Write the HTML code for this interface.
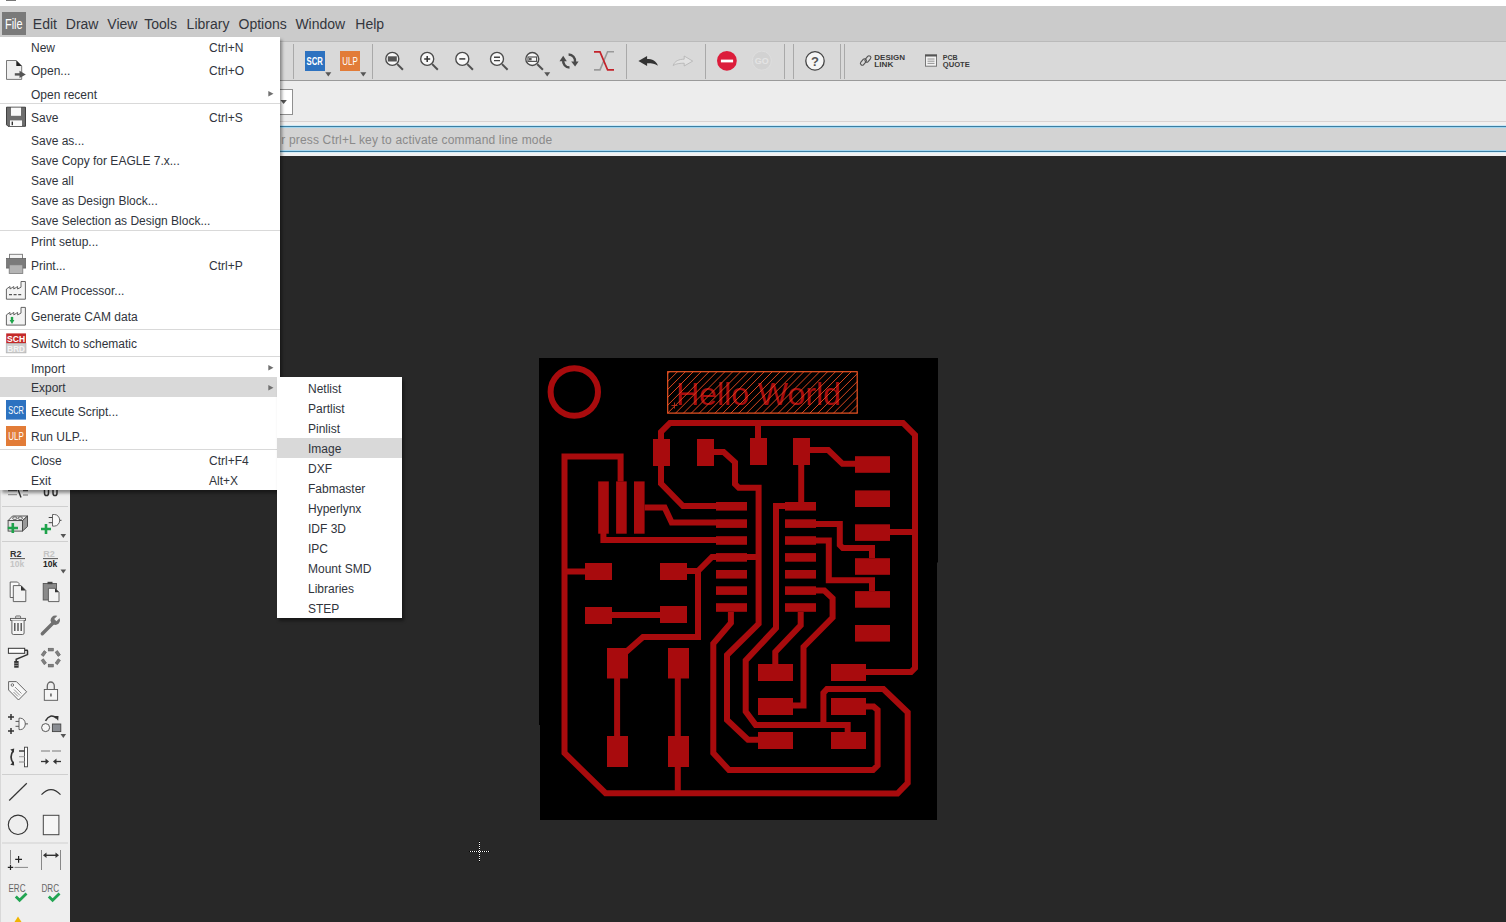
<!DOCTYPE html>
<html><head><meta charset="utf-8">
<style>
*{margin:0;padding:0;box-sizing:border-box}
html,body{width:1506px;height:922px;overflow:hidden;background:#282828;font-family:"Liberation Sans",sans-serif;position:relative}
.a{position:absolute}
.t{position:absolute;white-space:nowrap}
</style></head><body>
<div class="a" style="left:0;top:0;width:1506px;height:6px;background:#fff"></div>
<div class="a" style="left:6px;top:0;width:10px;height:1px;background:#777"></div>
<div class="a" style="left:0;top:6px;width:1506px;height:36px;background:#cbcbcb;border-bottom:1px solid #bababa"></div>
<div class="a" style="left:0;top:42px;width:1506px;height:39px;background:#d9d9d9;border-bottom:1px solid #9a9a9a"></div>
<div class="a" style="left:0;top:81px;width:1506px;height:41px;background:#ededed;border-bottom:1px solid #d8d3d3"></div>
<div class="a" style="left:0;top:122px;width:1506px;height:34px;background:#f1f1f1"></div>
<div class="a" style="left:0;top:125px;width:1506px;height:1px;background:#cde9f7"></div>
<div class="a" style="left:0;top:126px;width:1506px;height:1px;background:#3d7ea2"></div>
<div class="a" style="left:0;top:127px;width:1506px;height:1px;background:#a2d6ef"></div>
<div class="a" style="left:0;top:128px;width:1506px;height:22px;background:#d3d3d3"></div>
<div class="a" style="left:0;top:150px;width:1506px;height:1px;background:#a2d6ef"></div>
<div class="a" style="left:0;top:151px;width:1506px;height:1px;background:#3d7ea2"></div>
<div class="a" style="left:0;top:152px;width:1506px;height:1px;background:#d6eef8"></div>
<div class="a" style="left:0;top:156px;width:70px;height:766px;background:#eeeeee;border-left:1px solid #d8d8d8"></div>
<div class="a" style="left:2px;top:12px;width:24px;height:23px;background:#7a7a7a"></div>
<div class="t" style="left:5.20px;top:15.25px;font-size:14px;line-height:18px;color:#ffffff;transform:scaleX(0.78);transform-origin:0 0">File</div>

<div class="t" style="left:32.80px;top:15.25px;font-size:14px;line-height:18px;color:#33363d;">Edit</div>

<div class="t" style="left:65.80px;top:15.25px;font-size:14px;line-height:18px;color:#33363d;">Draw</div>

<div class="t" style="left:107.30px;top:15.25px;font-size:14px;line-height:18px;color:#33363d;">View</div>

<div class="t" style="left:144.30px;top:15.25px;font-size:14px;line-height:18px;color:#33363d;">Tools</div>

<div class="t" style="left:186.60px;top:15.25px;font-size:14px;line-height:18px;color:#33363d;">Library</div>

<div class="t" style="left:238.50px;top:15.25px;font-size:14px;line-height:18px;color:#33363d;">Options</div>

<div class="t" style="left:295.40px;top:15.25px;font-size:14px;line-height:18px;color:#33363d;">Window</div>

<div class="t" style="left:355.30px;top:15.25px;font-size:14px;line-height:18px;color:#33363d;">Help</div>

<div class="t" style="left:281.30px;top:133.14px;font-size:12px;line-height:15px;color:#8a8a8a;letter-spacing:0.16px">r press Ctrl+L key to activate command line mode</div>

<div class="a" style="left:250px;top:89px;width:43px;height:26px;background:#fff;border:1px solid #8f8f8f"></div>
<svg class="a" style="left:280px;top:100px" width="8" height="5"><path d="M0.4 0H6.9L3.65 3.9Z" fill="#555"/></svg>
<svg class="a" style="left:0;top:0" width="1506" height="100"><rect x="293" y="44" width="1" height="35" fill="#a9a9a9"/><rect x="305" y="51" width="20" height="20" fill="#2d72c0"/><text x="314.7" y="65" text-anchor="middle" font-family="Liberation Sans" font-weight="bold" font-size="11" fill="#fff" textLength="16.3" lengthAdjust="spacingAndGlyphs">SCR</text><path d="M325.3 72.2 L331.3 72.2 L328.3 76.4 Z" fill="#555"/><rect x="340" y="51" width="20" height="20" fill="#e27c38"/><text x="350" y="65" text-anchor="middle" font-family="Liberation Sans" font-size="10.5" fill="#fff" textLength="15.5" lengthAdjust="spacingAndGlyphs">ULP</text><path d="M360.3 72.2 L366.3 72.2 L363.3 76.4 Z" fill="#555"/><rect x="372" y="44" width="1" height="35" fill="#a9a9a9"/><line x1="397.3" y1="64.1" x2="402.90000000000003" y2="69.7" stroke="#505050" stroke-width="2"/><circle cx="392.3" cy="58.9" r="6.5" fill="#f8f8f8" stroke="#4a4a4a" stroke-width="1.35"/><rect x="387.8" y="56.3" width="9" height="5.2" fill="#555"/><line x1="432.2" y1="64.1" x2="437.8" y2="69.7" stroke="#505050" stroke-width="2"/><circle cx="427.2" cy="58.9" r="6.5" fill="#f8f8f8" stroke="#4a4a4a" stroke-width="1.35"/><path d="M424.2 58.9 H430.2 M427.2 55.9 V61.9" stroke="#333" stroke-width="1.5"/><line x1="467.3" y1="64.1" x2="472.90000000000003" y2="69.7" stroke="#505050" stroke-width="2"/><circle cx="462.3" cy="58.9" r="6.5" fill="#f8f8f8" stroke="#4a4a4a" stroke-width="1.35"/><path d="M459.3 58.9 H465.3" stroke="#444" stroke-width="1.6"/><line x1="502" y1="64.1" x2="507.6" y2="69.7" stroke="#505050" stroke-width="2"/><circle cx="497" cy="58.9" r="6.5" fill="#f8f8f8" stroke="#4a4a4a" stroke-width="1.35"/><path d="M494 57.3 H500 M494 60.6 H500" stroke="#444" stroke-width="1.4"/><line x1="537.3" y1="64.2" x2="542.9" y2="69.8" stroke="#505050" stroke-width="2"/><circle cx="532.3" cy="59" r="6.5" fill="#f8f8f8" stroke="#4a4a4a" stroke-width="1.35"/><rect x="528" y="57" width="8.6" height="4.4" fill="none" stroke="#555" stroke-width="1.2"/><rect x="529" y="58" width="2.6" height="2.4" fill="#555"/><path d="M544.2 72.2 L550.2 72.2 L547.2 76.4 Z" fill="#555"/><path d="M569.5 67.5 A6.5 6.5 0 0 1 563.2 60" fill="none" stroke="#4a4a4a" stroke-width="2.4"/><path d="M559.5 61.2 L563.2 55.8 L566.8 61.2 Z" fill="#4a4a4a"/><path d="M568.6 54.5 A6.5 6.5 0 0 1 575 62" fill="none" stroke="#4a4a4a" stroke-width="2.4"/><path d="M571.2 61.5 L575.1 66.6 L578.6 61.5 Z" fill="#4a4a4a"/><path d="M594 69.9 H600 L607.6 51.8 H614" fill="none" stroke="#9a9a9a" stroke-width="1.6"/><path d="M594 51.8 H600 L607.6 69.9 H614" fill="none" stroke="#c3222a" stroke-width="1.7"/><rect x="626" y="44" width="1" height="35" fill="#a9a9a9"/><path d="M638.4 61.1 L647.1 55.9 L647.1 59.1 C652 59.1 656.5 61 657.9 65.8 C655 63.6 651 63.1 647.1 63.2 L647.1 66.1 Z" fill="#333"/><path d="M692.7 61.1 L684.2 56 L684.2 59.2 C679 59.2 674.5 61 673.2 65.5 C676 63.6 680 63.2 684.2 63.2 L684.2 66 Z" fill="#e2e2e2" stroke="#b2b2b2" stroke-width="0.8"/><rect x="705" y="44" width="1" height="35" fill="#a9a9a9"/><circle cx="726.9" cy="60.8" r="9.9" fill="#dc1d3b"/><rect x="720.9" y="59.6" width="12.2" height="2.8" fill="#fff"/><circle cx="761.8" cy="60.7" r="9.5" fill="#d2d2d2" stroke="#e0e0e0" stroke-width="0.8"/><text x="761.8" y="64" text-anchor="middle" font-family="Liberation Sans" font-size="9" font-weight="bold" fill="#e4e4e4">GO</text><rect x="784" y="44" width="1" height="35" fill="#a9a9a9"/><rect x="793" y="44" width="1" height="35" fill="#a9a9a9"/><circle cx="815" cy="60.9" r="9.2" fill="#f5f5f5" stroke="#444" stroke-width="1.3"/><text x="815" y="65.6" text-anchor="middle" font-family="Liberation Sans" font-size="13" font-weight="bold" fill="#555">?</text><rect x="840" y="44" width="1" height="35" fill="#a9a9a9"/><rect x="844" y="44" width="1" height="35" fill="#a9a9a9"/><g fill="none" stroke="#555" stroke-width="1.1"><rect x="859.8" y="60.2" width="7.2" height="3.6" rx="1.8" transform="rotate(-50 863.4 62)"/><rect x="864.3" y="57.2" width="7.2" height="3.6" rx="1.8" transform="rotate(-50 867.9 59)"/></g><text x="874.3" y="59.6" font-family="Liberation Sans" font-weight="bold" font-size="8" fill="#3a3a3a" textLength="30.6" lengthAdjust="spacingAndGlyphs">DESIGN</text><text x="874.3" y="67.4" font-family="Liberation Sans" font-weight="bold" font-size="8" fill="#3a3a3a" textLength="19" lengthAdjust="spacingAndGlyphs">LINK</text><rect x="925.5" y="55" width="11" height="11.2" fill="#f2f2f2" stroke="#777" stroke-width="1"/><rect x="925" y="54.5" width="12" height="2" fill="#555"/><path d="M927.5 59 H934.5 M927.5 61.2 H934.5 M927.5 63.4 H934.5" stroke="#888" stroke-width="0.9"/><text x="942.8" y="59.6" font-family="Liberation Sans" font-weight="bold" font-size="8" fill="#3a3a3a" textLength="14.8" lengthAdjust="spacingAndGlyphs">PCB</text><text x="942.8" y="67.4" font-family="Liberation Sans" font-weight="bold" font-size="8" fill="#3a3a3a" textLength="27" lengthAdjust="spacingAndGlyphs">QUOTE</text></svg>
<svg class="a" style="left:0;top:0" width="72" height="922"><path d="M8 490.6 H17 M23 490.6 H28" stroke="#555" stroke-width="1.2"/><path d="M8 494.7 H17 M23 495 H28" stroke="#9a9a9a" stroke-width="1.3"/><path d="M18 489.5 L21 497.5" stroke="#333" stroke-width="1.4"/><path d="M44.5 489 V493 A2 2.6 0 0 0 48.5 493 V489 M53 489 V493 A2 2.6 0 0 0 57 493 V489" fill="none" stroke="#333" stroke-width="1.5"/><rect x="2" y="506" width="66" height="1" fill="#cfcfcf"/><path d="M8.1 520.6 L12.5 516 L27.5 516 L22.5 520.6 Z" fill="#f0f0f0" stroke="#444" stroke-width="0.9"/><path d="M22.5 520.6 L27.5 516 L27.5 526.5 L22.5 531.1 Z" fill="#9a9a9a" stroke="#444" stroke-width="0.9"/><rect x="8.1" y="520.6" width="14.4" height="10.5" fill="#e2e2e2" stroke="#444" stroke-width="0.9"/><ellipse cx="14.8" cy="518.2" rx="2.3" ry="1.3" fill="none" stroke="#444" stroke-width="0.8"/><ellipse cx="20.3" cy="518.2" rx="2.3" ry="1.3" fill="none" stroke="#444" stroke-width="0.8"/><path d="M7.8 528 H18 M12.8 523 V533" stroke="#1da24a" stroke-width="2.6"/><path d="M52.5 514.5 H54.5 A5.2 5.8 0 0 1 54.5 526.1 H52.5 Z" fill="#f8f8f8" stroke="#555" stroke-width="0.9"/><path d="M48.7 517.5 H52.5 M48.7 522.7 H52.5 M59.7 520.3 H61.5" stroke="#444" stroke-width="1"/><path d="M41 529 H51 M46 524 V534" stroke="#1da24a" stroke-width="2.6"/><path d="M60.5 534 L66.1 534 L63.3 538 Z" fill="#555"/><rect x="2" y="541" width="66" height="1" fill="#cfcfcf"/><text x="10" y="557" font-family="Liberation Sans" font-weight="bold" font-size="9" fill="#333">R2</text><rect x="10" y="558.2" width="15" height="0.9" fill="#444"/><text x="10" y="566.6" font-family="Liberation Sans" font-weight="bold" font-size="8.5" fill="#c4c4c4">10k</text><text x="43.3" y="557" font-family="Liberation Sans" font-weight="bold" font-size="9" fill="#c4c4c4">R2</text><rect x="43" y="558.2" width="15" height="0.9" fill="#444"/><text x="43" y="566.6" font-family="Liberation Sans" font-weight="bold" font-size="8.5" fill="#222">10k</text><path d="M60.5 569.5 L66.1 569.5 L63.3 573.5 Z" fill="#555"/><path d="M10.2 582 H17.5 L19 583.5 V597.5 H10.2 Z" fill="#fafafa" stroke="#555" stroke-width="0.9"/><path d="M13.3 585.6 H21 L25.8 590.4 V601.6 H13.3 Z" fill="#f2f2f2" stroke="#555" stroke-width="0.9"/><path d="M21 585.6 L25.8 590.4 H21 Z" fill="#333"/><rect x="43.2" y="583.5" width="13.3" height="16.5" fill="#8a8a8a" stroke="#555" stroke-width="0.9"/><rect x="47.5" y="581.8" width="5" height="2.4" fill="#444"/><path d="M48.4 588.3 H55 L59 592.3 V601.6 H48.4 Z" fill="#f2f2f2" stroke="#555" stroke-width="0.9"/><path d="M55 588.3 L59 592.3 H55 Z" fill="#333"/><rect x="15.6" y="616" width="5" height="2.3" rx="0.8" fill="none" stroke="#555" stroke-width="0.9"/><rect x="10.5" y="618.4" width="15" height="2" fill="#f5f5f5" stroke="#555" stroke-width="0.9"/><path d="M11.9 620.4 V633 Q11.9 634.5 13.4 634.5 H22.6 Q24.1 634.5 24.1 633 V620.4" fill="#f5f5f5" stroke="#555" stroke-width="0.9"/><path d="M14.8 623 V631 M18 623 V631 M21.2 623 V631" stroke="#444" stroke-width="1.3"/><path d="M42.3 633.8 L52.8 623.3" stroke="#707070" stroke-width="3.4" stroke-linecap="round"/><circle cx="55.3" cy="620.3" r="4.7" fill="#707070"/><rect x="56.2" y="614.2" width="3.2" height="7" fill="#eeeeee" transform="rotate(45 57.8 617.7)"/><rect x="8.4" y="648.3" width="16.3" height="5" fill="#fff" stroke="#333" stroke-width="1"/><path d="M24.7 650.3 H26.9 Q27.5 650.3 27.5 651 V654.6 L16.2 659.3 V661.5" fill="none" stroke="#333" stroke-width="1.5"/><rect x="14.2" y="661" width="4.4" height="6.7" fill="#333"/><path d="M14.2 663.3 H18.6 M14.2 665.5 H18.6" stroke="#999" stroke-width="0.8"/><rect x="48.199999999999996" y="648.2" width="5.2" height="2.8" fill="#808080" stroke="#555" stroke-width="0.5" transform="rotate(0 50.8 649.6)"/><rect x="48.199999999999996" y="664.2" width="5.2" height="2.8" fill="#808080" stroke="#555" stroke-width="0.5" transform="rotate(0 50.8 665.6)"/><rect x="41.199999999999996" y="652.1" width="5.2" height="2.8" fill="#808080" stroke="#555" stroke-width="0.5" transform="rotate(-55 43.8 653.5)"/><rect x="55.199999999999996" y="652.1" width="5.2" height="2.8" fill="#808080" stroke="#555" stroke-width="0.5" transform="rotate(55 57.8 653.5)"/><rect x="41.199999999999996" y="660.3000000000001" width="5.2" height="2.8" fill="#808080" stroke="#555" stroke-width="0.5" transform="rotate(55 43.8 661.7)"/><rect x="55.199999999999996" y="660.3000000000001" width="5.2" height="2.8" fill="#808080" stroke="#555" stroke-width="0.5" transform="rotate(-55 57.8 661.7)"/><path d="M8.6 681.6 H16.4 L26.6 691.8 L18.5 700 L8.6 690 Z" fill="#f7f7f7" stroke="#555" stroke-width="0.9"/><circle cx="12.4" cy="685" r="1.3" fill="none" stroke="#555" stroke-width="0.8"/><path d="M15 687 L21.5 693.5 M14 689.5 L20 695.5 M13.5 692 L18 696.5" stroke="#777" stroke-width="0.8"/><path d="M47.3 689.5 V686 A3.5 4 0 0 1 54.3 686 V689.5" fill="none" stroke="#666" stroke-width="1.3"/><rect x="44.3" y="689.5" width="13.3" height="10.8" fill="#f6f6f6" stroke="#555" stroke-width="0.9"/><rect x="50.3" y="693.5" width="1.3" height="3" fill="#444"/><path d="M8 717.1 H14 M11 714.1 V720.1 M8 731 H14 M11 728 V734" stroke="#333" stroke-width="1.5"/><path d="M19 718.2 H20.5 A4.8 5.7 0 0 1 20.5 729.6 H19 Z" fill="#f8f8f8" stroke="#555" stroke-width="0.9"/><path d="M15.5 721.4 H19 M15.5 726.3 H19 M25.2 723.9 H28" stroke="#555" stroke-width="1"/><circle cx="45.6" cy="727.6" r="4" fill="#f6f6f6" stroke="#444" stroke-width="0.9"/><rect x="52.4" y="724" width="8.4" height="7.6" fill="#898c92" stroke="#444" stroke-width="0.9"/><path d="M45.5 720.8 Q50 713 56.5 718" fill="none" stroke="#333" stroke-width="1.6"/><path d="M54 716 L58.5 716 L58.2 720.8 Z" fill="#333"/><path d="M60.5 734 L66.1 734 L63.3 738 Z" fill="#555"/><path d="M13.3 750.5 Q8.8 757 13.3 763.5" fill="none" stroke="#333" stroke-width="1.7"/><path d="M10.3 749.5 L14.2 748.5 L13.8 752.8 Z M10.3 764.7 L14.2 765.5 L13.8 761.3 Z" fill="#333"/><rect x="24.5" y="747.2" width="3" height="19.6" fill="#fff" stroke="#444" stroke-width="0.9"/><path d="M19 751 H24.5" stroke="#333" stroke-width="1.4"/><path d="M19 756.6 H24.5 M19 762 H24.5" stroke="#aaa" stroke-width="1.4"/><path d="M41 751 H50 M52 751 H61" stroke="#a0a0a0" stroke-width="1.4"/><path d="M41 761.5 H46" stroke="#333" stroke-width="1.3"/><path d="M45.5 758.5 L49 761.5 L45.5 764.5 Z" fill="#333"/><path d="M56 761.5 H61" stroke="#333" stroke-width="1.3"/><path d="M56.5 758.5 L53 761.5 L56.5 764.5 Z" fill="#333"/><rect x="2" y="774" width="66" height="1" fill="#cfcfcf"/><path d="M9.2 800.5 L26.8 783.2" stroke="#333" stroke-width="1.2"/><path d="M41.5 794.6 Q51 784.6 60.5 794.6" fill="none" stroke="#333" stroke-width="1.2"/><circle cx="18" cy="824.8" r="9.7" fill="none" stroke="#333" stroke-width="1.1"/><rect x="43.3" y="815.3" width="15.6" height="19.4" fill="#f6f6f6" stroke="#444" stroke-width="1"/><rect x="2" y="842.5" width="66" height="1" fill="#cfcfcf"/><path d="M10.5 850 V864 M14.5 867.4 H28 M41.5 850 V870 M60.5 850 V870" stroke="#888" stroke-width="1"/><path d="M7.8 867.4 H13.2 M10.5 864.7 V870.1 M15.2 859.3 H22 M18.6 855.9 V862.7" stroke="#222" stroke-width="1.2"/><path d="M45 855.3 H57" stroke="#333" stroke-width="1.4"/><path d="M43 855.3 L46.5 852.5 V858.1 Z M59 855.3 L55.5 852.5 V858.1 Z" fill="#333"/><text x="8.5" y="892" font-family="Liberation Sans" font-size="10.6" fill="#666" textLength="17" lengthAdjust="spacingAndGlyphs">ERC</text><text x="41.5" y="892" font-family="Liberation Sans" font-size="10.6" fill="#666" textLength="17.5" lengthAdjust="spacingAndGlyphs">DRC</text><path d="M15.8 896.5 L19.6 900.3 L26.5 893.6 M48.8 896.5 L52.6 900.3 L59.5 893.6" fill="none" stroke="#22a552" stroke-width="2.8"/><path d="M14.5 922 L18 916.5 L21.5 922 Z" fill="#f0b400"/></svg>
<svg class="a" style="left:0;top:0" width="1506" height="922" fill="#a80b0d"><path d="M539 358 H938 V562.5 H937 V820 H540 V725 H539 Z" fill="#000"/>
<rect x="653" y="439" width="17" height="27"/>
<rect x="697" y="439" width="17" height="27"/>
<rect x="750" y="438" width="17" height="27"/>
<rect x="793" y="438" width="17" height="27"/>
<rect x="598.2" y="481.4" width="10.6" height="52.3"/>
<rect x="616.1" y="481.4" width="10.6" height="52.3"/>
<rect x="634" y="481.4" width="10.6" height="52.3"/>
<rect x="585" y="563" width="27" height="17"/>
<rect x="660" y="563" width="27" height="17"/>
<rect x="585" y="607" width="27" height="17"/>
<rect x="660" y="606" width="27" height="17"/>
<rect x="607" y="648" width="21" height="30.5"/>
<rect x="668" y="648" width="21" height="30.5"/>
<rect x="607" y="736" width="21" height="31"/>
<rect x="668" y="736" width="21" height="31"/>
<rect x="758" y="664" width="35" height="17"/>
<rect x="758" y="698" width="35" height="17"/>
<rect x="758" y="732" width="35" height="17"/>
<rect x="831" y="664" width="35" height="17"/>
<rect x="831" y="698" width="35" height="17"/>
<rect x="831" y="732" width="35" height="17"/>
<rect x="855" y="456.2" width="35" height="16.6"/>
<rect x="855" y="490.4" width="35" height="16.6"/>
<rect x="855" y="524.3" width="35" height="16.6"/>
<rect x="855" y="558.2" width="35" height="16.6"/>
<rect x="855" y="591.1" width="35" height="16.6"/>
<rect x="855" y="625" width="35" height="16.6"/>
<rect x="716" y="502" width="31" height="8.6"/>
<rect x="785" y="502" width="31" height="8.6"/>
<rect x="716" y="519.3" width="31" height="8.6"/>
<rect x="785" y="519.3" width="31" height="8.6"/>
<rect x="716" y="536.2" width="31" height="8.6"/>
<rect x="785" y="536.2" width="31" height="8.6"/>
<rect x="716" y="553.1" width="31" height="8.6"/>
<rect x="785" y="553.1" width="31" height="8.6"/>
<rect x="716" y="570" width="31" height="8.6"/>
<rect x="785" y="570" width="31" height="8.6"/>
<rect x="716" y="586.3" width="31" height="8.6"/>
<rect x="785" y="586.3" width="31" height="8.6"/>
<rect x="716" y="603.2" width="31" height="8.6"/>
<rect x="785" y="603.2" width="31" height="8.6"/>
<path d="M661 439 L661 432 L670 423 L903 423 L915 435 L915 668 L911 672 L866 672" fill="none" stroke="#a80b0d" stroke-width="6" stroke-linejoin="miter"/>
<path d="M890 532 L915 532" fill="none" stroke="#a80b0d" stroke-width="6" stroke-linejoin="miter"/>
<path d="M758 423 L758 438" fill="none" stroke="#a80b0d" stroke-width="6" stroke-linejoin="miter"/>
<path d="M661 465 L661 483.6 L683 506 L716 506" fill="none" stroke="#a80b0d" stroke-width="6" stroke-linejoin="miter"/>
<path d="M620.6 481.4 L620.6 456.6 L564.5 456.6 L564.5 753 L605.6 793.2 L897.5 793.5 L907.7 783 L907.7 712.3 L883.4 689 L827 689 L823.4 693 L823.4 725" fill="none" stroke="#a80b0d" stroke-width="6" stroke-linejoin="miter"/>
<path d="M565 571.5 L585 571.5" fill="none" stroke="#a80b0d" stroke-width="6" stroke-linejoin="miter"/>
<path d="M612 615 L660 615" fill="none" stroke="#a80b0d" stroke-width="6" stroke-linejoin="miter"/>
<path d="M759 557 L712 557 L698 571 L687 571" fill="none" stroke="#a80b0d" stroke-width="6" stroke-linejoin="miter"/>
<path d="M698 571 L698 637 L643 637 L626 652" fill="none" stroke="#a80b0d" stroke-width="6" stroke-linejoin="miter"/>
<path d="M617.1 678 L617.1 736" fill="none" stroke="#a80b0d" stroke-width="6" stroke-linejoin="miter"/>
<path d="M677.8 678 L677.8 736" fill="none" stroke="#a80b0d" stroke-width="6" stroke-linejoin="miter"/>
<path d="M677.8 767 L677.8 793" fill="none" stroke="#a80b0d" stroke-width="6" stroke-linejoin="miter"/>
<path d="M603.4 533 L603.4 540 L716 540" fill="none" stroke="#a80b0d" stroke-width="6" stroke-linejoin="miter"/>
<path d="M644.6 507.4 L664.6 507.4 L671.7 522.5 L716 522.5" fill="none" stroke="#a80b0d" stroke-width="6" stroke-linejoin="miter"/>
<path d="M714 452 L723.6 452 L735 462.3 L735 484 L738.8 487.8 L758.6 487.8 L758.6 623.8 L727 655 L727 720 L748 739.8 L758 739.8" fill="none" stroke="#a80b0d" stroke-width="6" stroke-linejoin="miter"/>
<path d="M785 506 L776 506 L776 628 L745.7 660.5 L745.7 711.6 L755.6 724.9 L847.7 724.9 L847.7 732" fill="none" stroke="#a80b0d" stroke-width="6" stroke-linejoin="miter"/>
<path d="M810 450 L828.2 450 L842.5 463.8 L855 463.8" fill="none" stroke="#a80b0d" stroke-width="6" stroke-linejoin="miter"/>
<path d="M801.2 465 L801.2 502" fill="none" stroke="#a80b0d" stroke-width="6" stroke-linejoin="miter"/>
<path d="M816 523.9 L839.8 523.9 L839.8 545 L842.8 548 L872 548 L872 558" fill="none" stroke="#a80b0d" stroke-width="6" stroke-linejoin="miter"/>
<path d="M816 540.4 L828.8 540.4 L828.8 580.2 L872 580.2 L872 591" fill="none" stroke="#a80b0d" stroke-width="6" stroke-linejoin="miter"/>
<path d="M816 590.5 L824.3 590.5 L832.6 598.4 L832.6 617.5 L803.5 647 L803.5 705.5 L793 705.5" fill="none" stroke="#a80b0d" stroke-width="6" stroke-linejoin="miter"/>
<path d="M800.7 612 L800.7 625.2 L775.3 652 L775.3 664" fill="none" stroke="#a80b0d" stroke-width="6" stroke-linejoin="miter"/>
<path d="M730.9 612 L730.9 623 L713.3 643.6 L713.3 753 L729 770.1 L873 770.1 L877.6 765.6 L877.6 710 L873.6 706.6 L866 706.6" fill="none" stroke="#a80b0d" stroke-width="6" stroke-linejoin="miter"/>
<circle cx="574.3" cy="392" r="23.7" fill="none" stroke="#a80b0d" stroke-width="6"/>
<defs><clipPath id="hw"><rect x="667.2" y="371.2" width="190.5" height="42.4"/></clipPath></defs>
<text x="676" y="404.6" font-family="Liberation Sans" font-size="32" fill="#a80b0d">Hello World</text>
<path clip-path="url(#hw)" d="M588.2 413.6 L630.6 371.2 M596.1 413.6 L638.5 371.2 M604.0 413.6 L646.4 371.2 M611.9 413.6 L654.3 371.2 M619.8 413.6 L662.2 371.2 M627.7 413.6 L670.1 371.2 M635.6 413.6 L678.0 371.2 M643.5 413.6 L685.9 371.2 M651.4 413.6 L693.8 371.2 M659.3 413.6 L701.7 371.2 M667.2 413.6 L709.6 371.2 M675.1 413.6 L717.5 371.2 M683.0 413.6 L725.4 371.2 M690.9 413.6 L733.3 371.2 M698.8 413.6 L741.2 371.2 M706.7 413.6 L749.1 371.2 M714.6 413.6 L757.0 371.2 M722.5 413.6 L764.9 371.2 M730.4 413.6 L772.8 371.2 M738.3 413.6 L780.7 371.2 M746.2 413.6 L788.6 371.2 M754.1 413.6 L796.5 371.2 M762.0 413.6 L804.4 371.2 M769.9 413.6 L812.3 371.2 M777.8 413.6 L820.2 371.2 M785.7 413.6 L828.1 371.2 M793.6 413.6 L836.0 371.2 M801.5 413.6 L843.9 371.2 M809.4 413.6 L851.8 371.2 M817.3 413.6 L859.7 371.2 M825.2 413.6 L867.6 371.2 M833.1 413.6 L875.5 371.2 M841.0 413.6 L883.4 371.2 M848.9 413.6 L891.3 371.2 M856.8 413.6 L899.2 371.2 M864.7 413.6 L907.1 371.2 M872.6 413.6 L915.0 371.2 M880.5 413.6 L922.9 371.2 M888.4 413.6 L930.8 371.2 M896.3 413.6 L938.7 371.2 M904.2 413.6 L946.6 371.2 M912.1 413.6 L954.5 371.2 M920.0 413.6 L962.4 371.2 M927.9 413.6 L970.3 371.2 M935.8 413.6 L978.2 371.2 M943.7 413.6 L986.1 371.2 M951.6 413.6 L994.0 371.2 M959.5 413.6 L1001.9 371.2 M967.4 413.6 L1009.8 371.2 M975.3 413.6 L1017.7 371.2" stroke="#d9471f" stroke-width="1"/>
<rect x="667.7" y="371.7" width="189.5" height="41.4" fill="none" stroke="#ea5424" stroke-width="1.2"/>
<path d="M671.5 405.5 H677.5 M674.5 402.5 V408.5" stroke="#c0301a" stroke-width="0.9"/></svg>
<svg class="a" style="left:0;top:0" width="1506" height="922"><rect x="469" y="851" width="21" height="1" fill="#000"/><rect x="479" y="841" width="1" height="21" fill="#000"/><rect x="470" y="851" width="1" height="1" fill="#fff"/><rect x="479" y="842" width="1" height="1" fill="#fff"/><rect x="472" y="851" width="1" height="1" fill="#fff"/><rect x="479" y="844" width="1" height="1" fill="#fff"/><rect x="474" y="851" width="1" height="1" fill="#fff"/><rect x="479" y="846" width="1" height="1" fill="#fff"/><rect x="476" y="851" width="1" height="1" fill="#fff"/><rect x="479" y="848" width="1" height="1" fill="#fff"/><rect x="482" y="851" width="1" height="1" fill="#fff"/><rect x="479" y="854" width="1" height="1" fill="#fff"/><rect x="484" y="851" width="1" height="1" fill="#fff"/><rect x="479" y="856" width="1" height="1" fill="#fff"/><rect x="486" y="851" width="1" height="1" fill="#fff"/><rect x="479" y="858" width="1" height="1" fill="#fff"/><rect x="488" y="851" width="1" height="1" fill="#fff"/><rect x="479" y="860" width="1" height="1" fill="#fff"/><rect x="478" y="851" width="1" height="1" fill="#fff"/><rect x="480" y="851" width="1" height="1" fill="#fff"/><rect x="479" y="850" width="1" height="1" fill="#fff"/><rect x="479" y="852" width="1" height="1" fill="#fff"/></svg>
<div class="a" style="left:0;top:36.5px;width:280px;height:453.3px;background:#fff;box-shadow:2px 3px 3px rgba(0,0,0,0.4)"></div>
<div class="a" style="left:0;top:377px;width:280px;height:20px;background:#d9d9d9"></div>
<div class="a" style="left:0;top:103px;width:280px;height:1px;background:#d9d9d9"></div>
<div class="a" style="left:0;top:230px;width:280px;height:1px;background:#d9d9d9"></div>
<div class="a" style="left:0;top:329px;width:280px;height:1px;background:#d9d9d9"></div>
<div class="a" style="left:0;top:356px;width:280px;height:1px;background:#d9d9d9"></div>
<div class="a" style="left:0;top:449px;width:280px;height:1px;background:#d9d9d9"></div>
<div class="t" style="left:31.00px;top:41.44px;font-size:12px;line-height:15px;color:#30343c;">New</div>

<div class="t" style="left:209.00px;top:41.44px;font-size:12px;line-height:15px;color:#30343c;">Ctrl+N</div>

<div class="t" style="left:31.00px;top:64.24px;font-size:12px;line-height:15px;color:#30343c;">Open...</div>

<div class="t" style="left:209.00px;top:64.24px;font-size:12px;line-height:15px;color:#30343c;">Ctrl+O</div>

<div class="t" style="left:31.00px;top:87.54px;font-size:12px;line-height:15px;color:#30343c;">Open recent</div>

<div class="t" style="left:31.00px;top:111.44px;font-size:12px;line-height:15px;color:#30343c;">Save</div>

<div class="t" style="left:209.00px;top:111.44px;font-size:12px;line-height:15px;color:#30343c;">Ctrl+S</div>

<div class="t" style="left:31.00px;top:134.34px;font-size:12px;line-height:15px;color:#30343c;">Save as...</div>

<div class="t" style="left:31.00px;top:154.04px;font-size:12px;line-height:15px;color:#30343c;">Save Copy for EAGLE 7.x...</div>

<div class="t" style="left:31.00px;top:173.94px;font-size:12px;line-height:15px;color:#30343c;">Save all</div>

<div class="t" style="left:31.00px;top:194.04px;font-size:12px;line-height:15px;color:#30343c;">Save as Design Block...</div>

<div class="t" style="left:31.00px;top:213.94px;font-size:12px;line-height:15px;color:#30343c;">Save Selection as Design Block...</div>

<div class="t" style="left:31.00px;top:235.24px;font-size:12px;line-height:15px;color:#30343c;">Print setup...</div>

<div class="t" style="left:31.00px;top:258.54px;font-size:12px;line-height:15px;color:#30343c;">Print...</div>

<div class="t" style="left:209.00px;top:258.54px;font-size:12px;line-height:15px;color:#30343c;">Ctrl+P</div>

<div class="t" style="left:31.00px;top:283.94px;font-size:12px;line-height:15px;color:#30343c;">CAM Processor...</div>

<div class="t" style="left:31.00px;top:310.04px;font-size:12px;line-height:15px;color:#30343c;">Generate CAM data</div>

<div class="t" style="left:31.00px;top:337.24px;font-size:12px;line-height:15px;color:#30343c;">Switch to schematic</div>

<div class="t" style="left:31.00px;top:361.74px;font-size:12px;line-height:15px;color:#30343c;">Import</div>

<div class="t" style="left:31.00px;top:381.24px;font-size:12px;line-height:15px;color:#30343c;">Export</div>

<div class="t" style="left:31.00px;top:404.54px;font-size:12px;line-height:15px;color:#30343c;">Execute Script...</div>

<div class="t" style="left:31.00px;top:430.24px;font-size:12px;line-height:15px;color:#30343c;">Run ULP...</div>

<div class="t" style="left:31.00px;top:454.44px;font-size:12px;line-height:15px;color:#30343c;">Close</div>

<div class="t" style="left:209.00px;top:454.44px;font-size:12px;line-height:15px;color:#30343c;">Ctrl+F4</div>

<div class="t" style="left:31.00px;top:474.24px;font-size:12px;line-height:15px;color:#30343c;">Exit</div>

<div class="t" style="left:209.00px;top:474.24px;font-size:12px;line-height:15px;color:#30343c;">Alt+X</div>

<svg class="a" style="left:268px;top:90.8px" width="6" height="6"><path d="M0.3 0L5.5 2.7L0.3 5.4Z" fill="#707070"/></svg>
<svg class="a" style="left:268px;top:364.8px" width="6" height="6"><path d="M0.3 0L5.5 2.7L0.3 5.4Z" fill="#707070"/></svg>
<svg class="a" style="left:268px;top:384.90000000000003px" width="6" height="6"><path d="M0.3 0L5.5 2.7L0.3 5.4Z" fill="#707070"/></svg>
<div class="a" style="left:277px;top:377px;width:125px;height:241px;background:#fff;box-shadow:2px 3px 3px rgba(0,0,0,0.4)"></div>
<div class="a" style="left:277px;top:437.5px;width:125px;height:20px;background:#d9d9d9"></div>
<div class="t" style="left:308.00px;top:381.54px;font-size:12px;line-height:15px;color:#30343c;">Netlist</div>

<div class="t" style="left:308.00px;top:401.54px;font-size:12px;line-height:15px;color:#30343c;">Partlist</div>

<div class="t" style="left:308.00px;top:421.54px;font-size:12px;line-height:15px;color:#30343c;">Pinlist</div>

<div class="t" style="left:308.00px;top:441.54px;font-size:12px;line-height:15px;color:#30343c;">Image</div>

<div class="t" style="left:308.00px;top:461.54px;font-size:12px;line-height:15px;color:#30343c;">DXF</div>

<div class="t" style="left:308.00px;top:481.54px;font-size:12px;line-height:15px;color:#30343c;">Fabmaster</div>

<div class="t" style="left:308.00px;top:501.54px;font-size:12px;line-height:15px;color:#30343c;">Hyperlynx</div>

<div class="t" style="left:308.00px;top:521.54px;font-size:12px;line-height:15px;color:#30343c;">IDF 3D</div>

<div class="t" style="left:308.00px;top:541.54px;font-size:12px;line-height:15px;color:#30343c;">IPC</div>

<div class="t" style="left:308.00px;top:561.54px;font-size:12px;line-height:15px;color:#30343c;">Mount SMD</div>

<div class="t" style="left:308.00px;top:581.54px;font-size:12px;line-height:15px;color:#30343c;">Libraries</div>

<div class="t" style="left:308.00px;top:601.54px;font-size:12px;line-height:15px;color:#30343c;">STEP</div>

<svg class="a" style="left:0;top:0" width="40" height="500"><path d="M6.5 60.5 H16.3 L21.7 66 V79.4 H6.5 Z" fill="#efefef" stroke="#6a6a6a" stroke-width="0.9"/><path d="M16.3 60.5 L21.7 66 H16.3 Z" fill="#222"/><path d="M14.8 74.4 H20.5" stroke="#555" stroke-width="2.4"/><path d="M19.5 70.8 L25.8 74.4 L19.5 78 Z" fill="#555"/><path d="M6.5 107.2 H25.5 V126.3 H8 L6.5 124.8 Z" fill="#6e6e6e" stroke="#333" stroke-width="0.9"/><rect x="11" y="107.6" width="10" height="8.2" fill="#fafafa"/><rect x="10" y="120.4" width="12" height="5.6" fill="#fafafa"/><rect x="11.6" y="121.6" width="1.4" height="3.6" fill="#333"/><rect x="9.5" y="254.3" width="13" height="7" fill="#f4f4f4" stroke="#777" stroke-width="0.9"/><rect x="6.5" y="258.3" width="19.2" height="9.8" fill="#7b7b7b" stroke="#555" stroke-width="0.6"/><rect x="9.2" y="264.8" width="13.6" height="8.6" fill="#b4b4b4" stroke="#777" stroke-width="0.8"/><path d="M6.4 299.2 V289 L10 286.5 V289 L13.8 286.5 V289 L17.6 286.5 V289 L21 287.2 V281.5 H25.4 V299.2 Z" fill="#f3f3f3" stroke="#555" stroke-width="0.9"/><path d="M9 294.6 H12 M13.6 294.6 H16.6 M18.2 294.6 H21.2" stroke="#555" stroke-width="1.2"/><path d="M6.4 325.09999999999997 V314.9 L10 312.4 V314.9 L13.8 312.4 V314.9 L17.6 312.4 V314.9 L21 313.09999999999997 V307.4 H25.4 V325.09999999999997 Z" fill="#f3f3f3" stroke="#555" stroke-width="0.9"/><path d="M12 316.9 V320.9" stroke="#1ea44a" stroke-width="2.4"/><path d="M9.6 320.09999999999997 H14.4 L12 323.9 Z" fill="#1ea44a"/><rect x="6.2" y="333.4" width="19.8" height="10" fill="#c42a2a"/><rect x="6.2" y="343.4" width="19.8" height="9.5" fill="#cfcfcf" stroke="#aaa" stroke-width="0.6"/><text x="16.1" y="342.4" text-anchor="middle" font-family="Liberation Sans" font-weight="bold" font-size="9" fill="#fff" textLength="18" lengthAdjust="spacingAndGlyphs">SCH</text><text x="16.1" y="352" text-anchor="middle" font-family="Liberation Sans" font-weight="bold" font-size="9" fill="#f4f4f4" textLength="17.5" lengthAdjust="spacingAndGlyphs">BRD</text><rect x="6" y="400" width="20" height="19.6" fill="#2d72c0"/><text x="16" y="414.2" text-anchor="middle" font-family="Liberation Sans" font-size="10.5" fill="#fff" textLength="15.5" lengthAdjust="spacingAndGlyphs">SCR</text><rect x="6" y="426" width="20" height="20" fill="#e27c38"/><text x="16" y="440.4" text-anchor="middle" font-family="Liberation Sans" font-size="10.5" fill="#fff" textLength="15.5" lengthAdjust="spacingAndGlyphs">ULP</text></svg>
</body></html>
